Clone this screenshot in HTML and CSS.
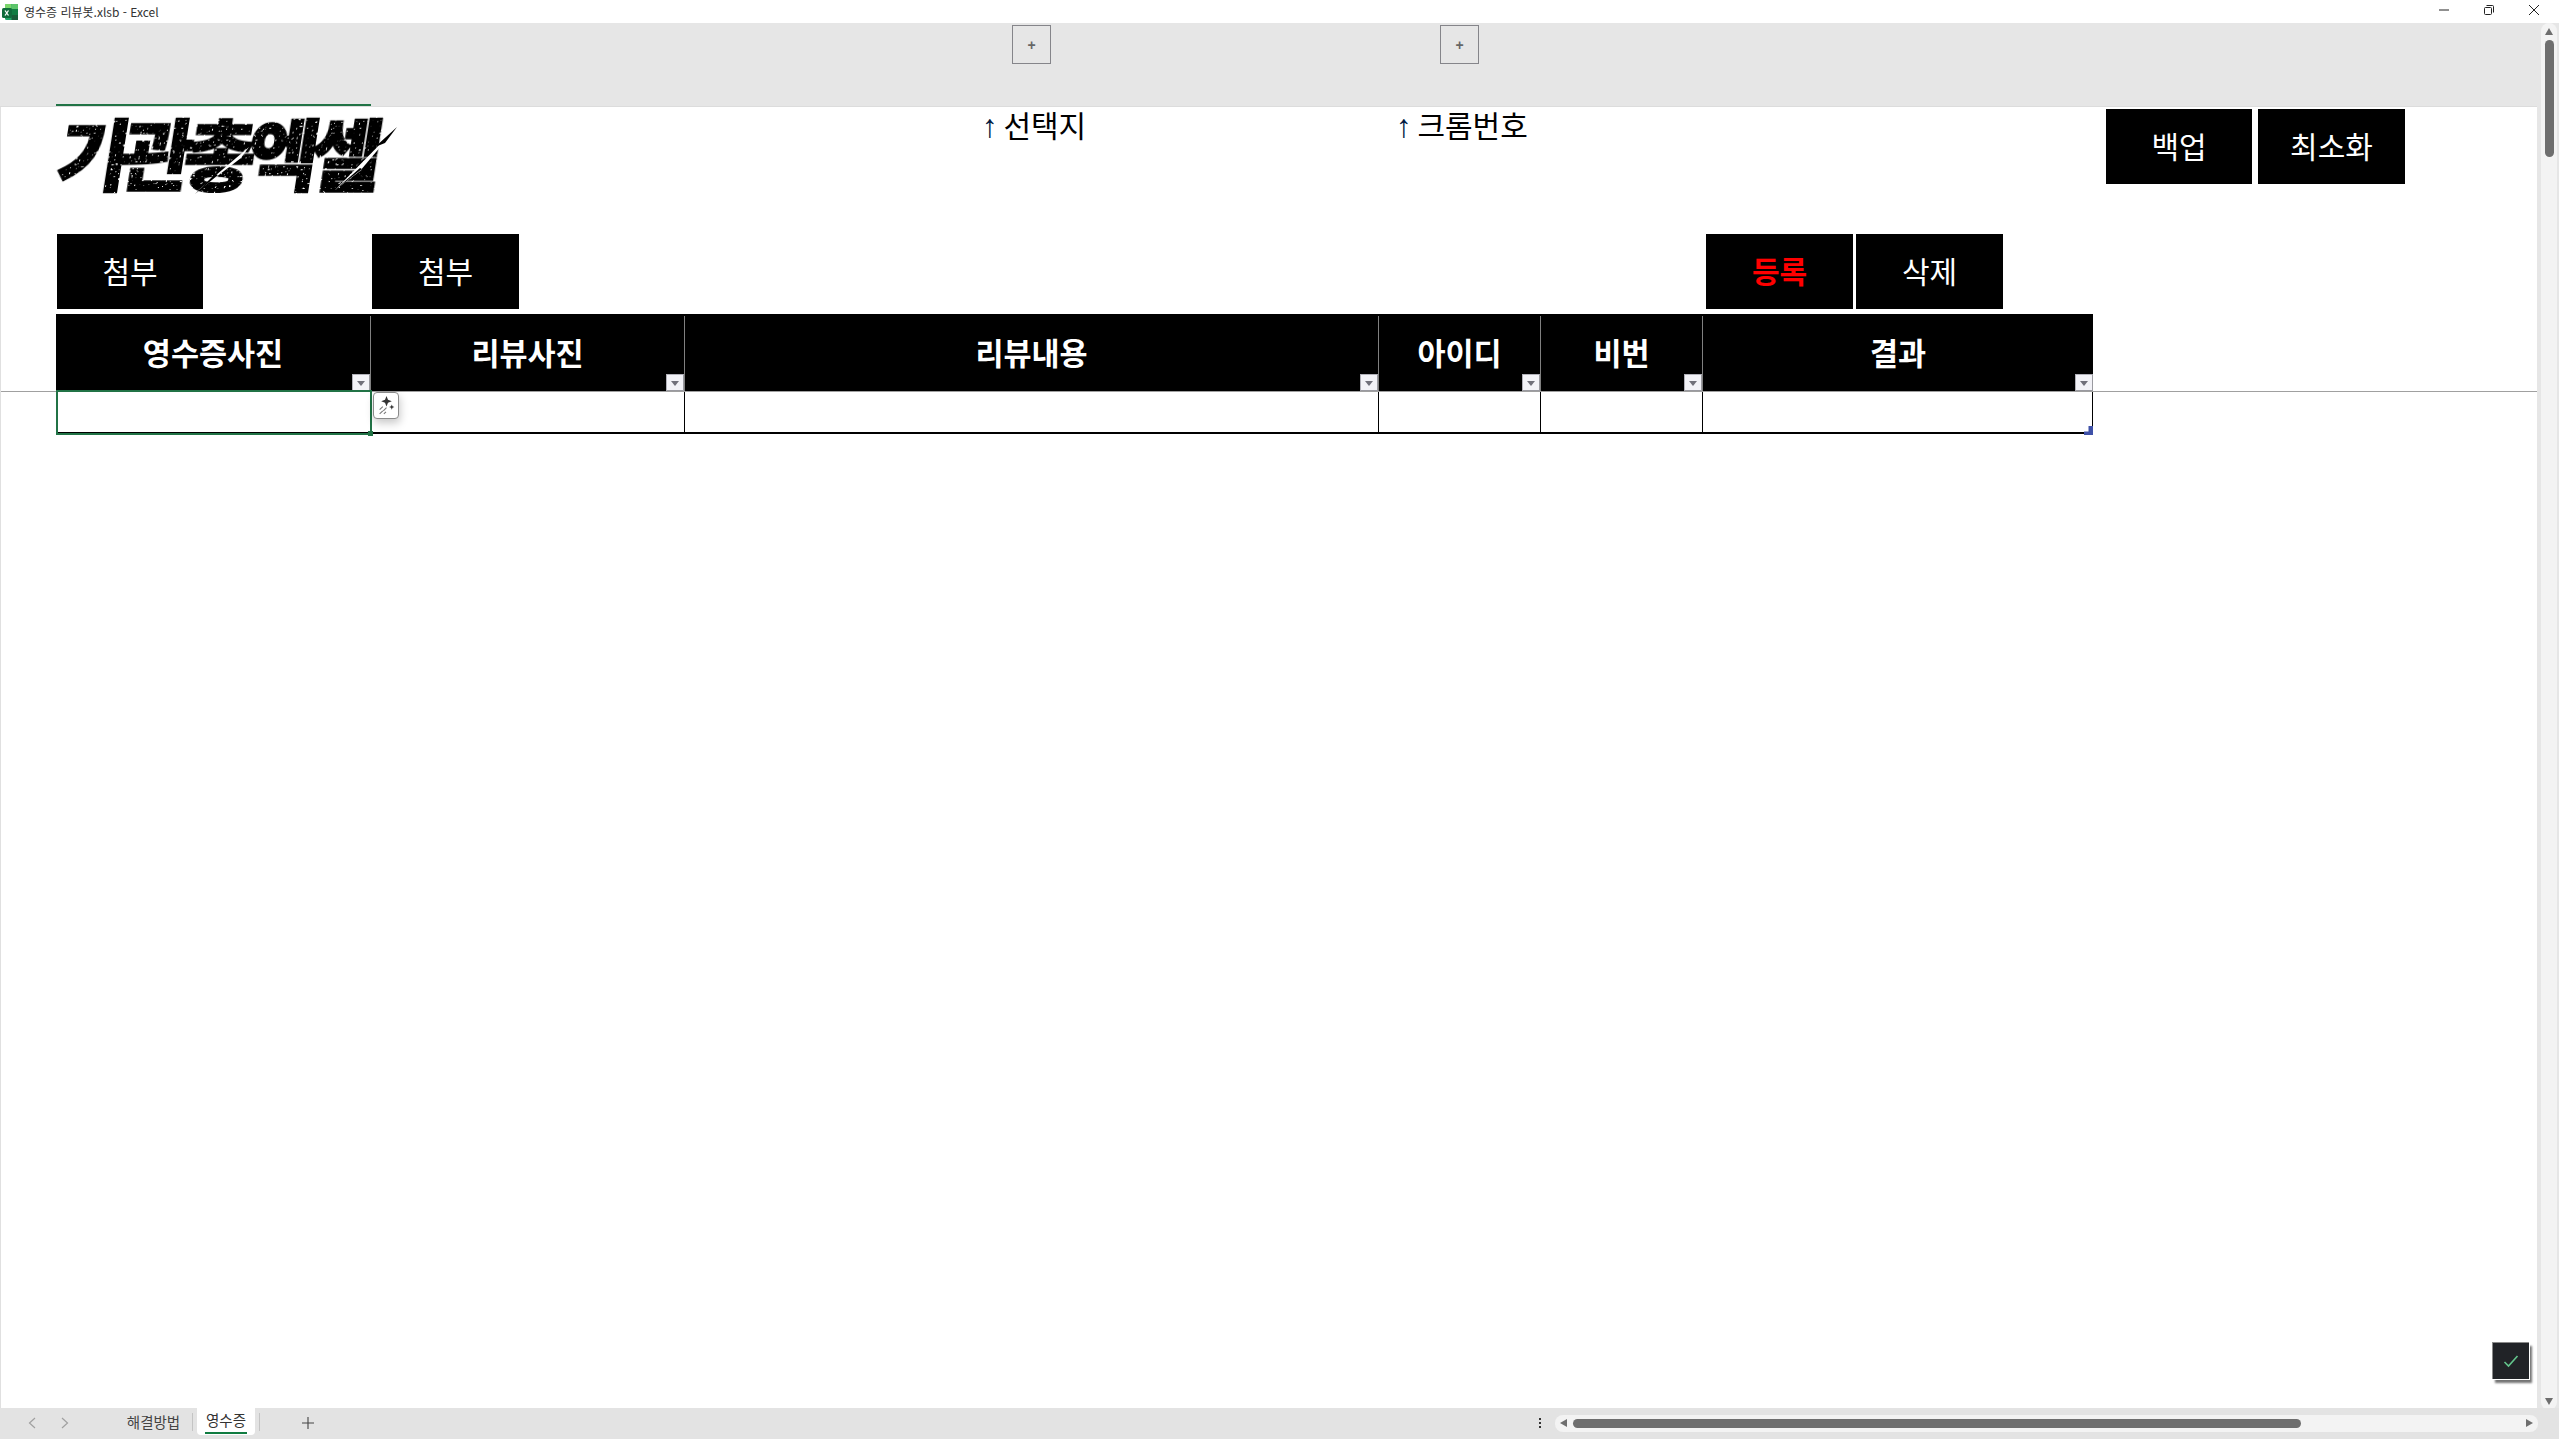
FILE: index.html
```html
<!DOCTYPE html>
<html lang="ko">
<head>
<meta charset="utf-8">
<title>영수증 리뷰봇.xlsb - Excel</title>
<link rel="stylesheet" href="styles.css">
</head>
<body>
<header class="titlebar">
  <svg class="app-icon" viewBox="0 0 16 16" width="16" height="16"><rect x="3" y="0" width="13" height="16" rx="1.5" fill="#21a366"/><rect x="3" y="0" width="6.5" height="5" rx="1" fill="#7ad66b"/><rect x="9.5" y="0" width="6.5" height="5" fill="#5cc46a"/><rect x="9.5" y="5" width="6.5" height="6" fill="#107c41"/><rect x="9.5" y="11" width="6.5" height="5" fill="#185c37"/><rect x="0" y="4" width="10" height="10" rx="1.5" fill="#0f6b3a"/><path d="M3 6.5l3.5 5M6.5 6.5l-3.5 5" stroke="#fff" stroke-width="1.3" fill="none"/></svg>
  <span class="app-title">영수증 리뷰봇.xlsb - Excel</span>
  <div class="win-controls">
    <svg viewBox="0 0 12 12" width="12" height="12"><path d="M1 6h10" stroke="#222" fill="none"/></svg>
    <svg viewBox="0 0 12 12" width="12" height="12"><rect x="1.5" y="3.5" width="7" height="7" rx="1" stroke="#222" fill="none"/><path d="M3.5 1.5h6a1 1 0 0 1 1 1v6" stroke="#222" fill="none"/></svg>
    <svg viewBox="0 0 12 12" width="12" height="12"><path d="M1 1l10 10M11 1L1 11" stroke="#222" fill="none"/></svg>
  </div>
</header>

<div class="middle">
  <main class="workspace">
    <div class="group-band">
      <span class="col-mark"></span>
      <button class="outline-btn first">+</button>
      <button class="outline-btn second">+</button>
    </div>

    <section class="sheet">
      <div class="row-logo">
        <div class="logo-cell">
          <div class="logo">
            <span class="logo-text">기관총엑셀</span>
            <svg class="logo-slash" viewBox="0 0 340 90" width="340" height="90">
              <path d="M138 84L192 38L184 49L150 75Z" fill="#fff"/>
              <path d="M138 85l20-20 3 1Z" fill="#000"/>
              <path d="M278 81L340 18L303 62Z" fill="#fff"/>
              <path d="M278 81l25-22 2 1Z M318 38l22-20-12 16Z" fill="#000"/>
            </svg>
          </div>
        </div>
        <p class="caption caption-a"><span class="arrow">↑</span> 선택지</p>
        <p class="caption caption-b"><span class="arrow">↑</span> 크롬번호</p>
        <button class="shape backup">백업</button>
        <button class="shape gap-6">최소화</button>
      </div>

      <div class="row-actions">
        <button class="shape attach-a">첨부</button>
        <button class="shape attach-b">첨부</button>
        <button class="shape register">등록</button>
        <button class="shape gap-3">삭제</button>
      </div>

      <div class="table-head-line">
        <div class="table-grid head">
          <div class="th">영수증사진<span class="filter"></span></div>
          <div class="th">리뷰사진<span class="filter"></span></div>
          <div class="th">리뷰내용<span class="filter"></span></div>
          <div class="th">아이디<span class="filter"></span></div>
          <div class="th">비번<span class="filter"></span></div>
          <div class="th">결과<span class="filter"></span></div>
        </div>
      </div>
      <div class="table-body">
        <div class="table-grid body">
          <div class="td selected"><span class="fill-handle"></span>
            <span class="smart-tag">
              <svg viewBox="0 0 16 18" width="17" height="19"><path d="M8 0l1.400 3.600L13 5 9.400 6.400 8 10 6.600 6.400 3 5l3.600-1.400z" fill="#333"/><path d="M13 8l.7 1.800 1.800.7-1.800.7L13 13l-.7-1.800-1.800-.7 1.800-.7z" fill="#333"/><path d="M1.500 13l3-3M5 14l3-3M1.500 17l3-3M5.500 17l2-2" stroke="#777" stroke-width="1" fill="none"/></svg>
            </span>
          </div>
          <div class="td"></div>
          <div class="td"></div>
          <div class="td"></div>
          <div class="td"></div>
          <div class="td last"><span class="resize-handle"></span></div>
        </div>
      </div>

      <div class="status-check">
        <svg viewBox="0 0 16 14" width="16" height="14"><path d="M1.500 8l4 4L14.500 2" stroke="#63c58c" stroke-width="1.600" fill="none"/></svg>
      </div>
    </section>
  </main>

  <aside class="vscroll">
    <div class="vtrack">
      <span class="tri up"></span>
      <span class="vthumb"></span>
      <span class="tri down"></span>
    </div>
  </aside>
</div>

<footer class="bottombar">
  <svg class="nav" viewBox="0 0 8 12" width="8" height="12"><path d="M7 1L1.500 6 7 11" stroke="#a0a0a0" stroke-width="1.200" fill="none"/></svg>
  <svg class="nav nav-next" viewBox="0 0 8 12" width="8" height="12"><path d="M1 1l5.500 5L1 11" stroke="#a0a0a0" stroke-width="1.200" fill="none"/></svg>
  <span class="tab">해결방법</span>
  <span class="tab-sep"></span>
  <span class="tab active">영수증</span>
  <span class="tab-sep after"></span>
  <svg class="add-sheet" viewBox="0 0 12 12" width="12" height="12"><path d="M6 0v12M0 6h12" stroke="#444" stroke-width="1.100" fill="none"/></svg>
  <span class="dots"><i></i><i></i><i></i></span>
  <div class="htrack">
    <span class="tri left"></span>
    <span class="hthumb"></span>
    <span class="tri right"></span>
  </div>
</footer>

<svg class="defs" width="0" height="0">
  <filter id="grunge" x="0" y="0" width="100%" height="100%">
    <feTurbulence type="fractalNoise" baseFrequency="0.42" numOctaves="2" seed="7" result="n"/>
    <feColorMatrix in="n" type="matrix" values="0 0 0 0 0 0 0 0 0 0 0 0 0 0 0 0 0 0 -14 10.600" result="m"/>
    <feComposite in="SourceGraphic" in2="m" operator="in"/>
  </filter>
</svg>
</body>
</html>
```
FILE: styles.css
```css
* { box-sizing: border-box; }
html, body { margin: 0; height: 100%; }
body {
  width: 2559px;
  height: 1439px;
  overflow: hidden;
  background: #fff;
  display: flex;
  flex-direction: column;
  font-family: "Noto Sans CJK KR", "Noto Sans", sans-serif;
  color: #000;
}
.defs { position: absolute; }

/* title bar */
.titlebar {
  height: 23px;
  flex: none;
  display: flex;
  align-items: center;
  padding-left: 2px;
  background: #fff;
}
.app-icon { flex: none; }
.app-title {
  margin-left: 6px;
  font-size: 12px;
  color: #333;
  line-height: 23px;
}
.win-controls {
  margin-left: auto;
  display: flex;
  gap: 33px;
  padding-right: 19px;
  margin-top: -3px;
}

/* middle */
.middle { height: 1385px; flex: none; display: flex; }
.workspace { width: 2537px; display: flex; flex-direction: column; }

.group-band {
  height: 84px;
  flex: none;
  position: relative;
  display: flex;
  align-items: flex-start;
  background: #e6e6e6;
  border-bottom: 1px solid #dcdcdc;
}
.col-mark {
  position: absolute;
  left: 56px;
  bottom: 0;
  width: 315px;
  height: 2px;
  background: #217346;
}
.outline-btn {
  width: 39px;
  height: 39px;
  margin: 2px 0 0;
  padding: 0;
  border: 1px solid #85858a;
  background: #e6e6e6;
  color: #666;
  font: 700 14px/1 "Liberation Sans", sans-serif;
}
.outline-btn.first { margin-left: 1012px; }
.outline-btn.second { margin-left: 389px; }

/* sheet */
.sheet {
  position: relative;
  flex: 1;
  border-left: 1px solid #e0e0e0;
  background: #fff;
}
.row-logo {
  display: flex;
  height: 127px;
  padding-top: 2px;
  align-items: flex-start;
}
.logo-cell { width: 981px; padding-left: 56px; }
.logo { position: relative; width: 340px; height: 90px; }
.logo-text {
  display: block;
  transform: skewX(-9deg);
  transform-origin: left bottom;
  font-size: 78px;
  font-weight: 900;
  line-height: 84px;
  letter-spacing: -8.500px;
  white-space: nowrap;
  color: #000;
  margin-left: -5px;
  -webkit-text-stroke: 1.500px #000;
  filter: url(#grunge);
}
.logo-slash { position: absolute; left: 0; top: 0; }

.caption {
  margin: -1px 0 0;
  font-size: 30px;
  line-height: 32px;
  white-space: nowrap;
}
.arrow { font-family: "Liberation Sans", sans-serif; color: #001a40; font-size: 32px; margin-right: -3px; }
.caption-a { width: 414px; }
.caption-b { width: 710px; }

.shape {
  flex: none;
  width: 147px;
  height: 75px;
  padding: 0 0 3px;
  border: 0;
  background: #000;
  color: #fff;
  font-family: inherit;
  font-size: 30px;
  font-weight: 400;
}
.backup { width: 146px; }
.gap-6 { margin-left: 6px; }
.gap-3 { margin-left: 3px; }

.row-actions { display: flex; height: 75px; margin-bottom: 5px; }
.attach-a { margin-left: 56px; width: 146px; }
.attach-b { margin-left: 169px; }
.register { margin-left: 1187px; color: #f00; font-weight: 700; }

/* table */
.table-head-line { border-bottom: 1px solid #a0a0a0; padding-left: 55px; height: 78px; }
.table-body { padding-left: 55px; }
.table-grid {
  display: grid;
  grid-template-columns: 315px 314px 694px 162px 162px 390px;
  width: 2037px;
}
.table-grid.head { height: 77px; background: #000; }
.th {
  position: relative;
  display: flex;
  align-items: center;
  justify-content: center;
  color: #fff;
  font-size: 30.500px;
  font-weight: 700;
  margin-top: 2px;
  border-right: 1px solid #808080;
}
.th:last-child { border-right: 0; }
.th { padding-bottom: 3px; }
.filter {
  position: absolute;
  right: 0;
  bottom: 0;
  width: 18px;
  height: 17px;
  background: #f2f2f7;
  border: 1px solid #b0b0b8;
  border-right-color: #9a9aa0;
  border-bottom-color: #9a9aa0;
}
.filter::after {
  content: "";
  position: absolute;
  left: 4px;
  top: 6px;
  border: 4px solid transparent;
  border-top: 5px solid #70707a;
  border-bottom: 0;
}
.table-grid.body { height: 42px; border-bottom: 2px solid #000; border-right: 1px solid #000; }
.td { position: relative; border-right: 1px solid #000; }
.td.last { border-right: 0; }
.td.selected {
  margin: -2px -1px -2px 0;
  border: 2px solid #217346;
  height: 45px;
  z-index: 1;
}
.fill-handle {
  position: absolute;
  right: -3px;
  bottom: -3px;
  width: 5px;
  height: 5px;
  background: #217346;
  border: 0;
}
.smart-tag {
  position: absolute;
  left: 315px;
  top: 0;
  width: 26px;
  height: 27px;
  background: #fff;
  border: 1px solid #8a8a8a;
  border-radius: 4px;
  box-shadow: 1px 4px 8px rgba(0,0,0,.22);
  display: flex;
  align-items: center;
  justify-content: center;
}
.resize-handle {
  position: absolute;
  right: 0;
  bottom: -2px;
  width: 9px;
  height: 9px;
  background: #3f51a8;
  clip-path: polygon(100% 0, 100% 100%, 0 100%, 0 60%, 50% 60%, 50% 0);
}
.status-check {
  position: absolute;
  right: 8px;
  bottom: 29px;
  width: 37px;
  height: 37px;
  background: #212327;
  border-top: 1px solid #8a8a8a;
  border-left: 1px solid #8a8a8a;
  outline: 0;
  box-shadow: 1px 1px 0 #fff, 3px 4px 2px rgba(0,0,0,.55);
  display: flex;
  align-items: center;
  justify-content: center;
}

/* scrollbars */
.vscroll { width: 22px; background: #e6e6e6; padding-left: 4px; padding-right: 2px; }
.vtrack {
  position: relative;
  height: 1387px;
  background: #f3f3f3;
  border-radius: 8px;
  display: flex;
  flex-direction: column;
  align-items: center;
  padding-top: 17px;
}
.vthumb { width: 9px; height: 117px; border-radius: 5px; background: #6e6e6e; }
.tri { position: absolute; width: 0; height: 0; border: 4.500px solid transparent; }
.tri.up { top: 5px; border-top: 0; border-bottom: 7px solid #6e6e6e; }
.tri.down { bottom: 5px; border-bottom: 0; border-top: 7px solid #6e6e6e; }
.tri.left { left: 5px; top: 4px; border-left: 0; border-right: 7px solid #6e6e6e; }
.tri.right { right: 5px; top: 4px; border-right: 0; border-left: 7px solid #6e6e6e; }

.bottombar {
  height: 31px;
  flex: none;
  display: flex;
  align-items: center;
  background: #e3e3e3;
  position: relative;
}
.nav { margin-left: 28px; flex: none; margin-top: -2px; }
.nav-next { margin-left: 25px; }
.tab {
  font-size: 14.500px;
  color: #444;
  line-height: 27px;
  white-space: nowrap;
  margin-left: 57px;
  width: 55px;
  align-self: flex-start;
  text-align: center;
}
.tab-sep { width: 1px; height: 18px; background: #c4c4c4; margin-left: 11px; margin-top: -4px; }
.tab.active {
  position: relative;
  margin-left: 4px;
  width: 58px;
  height: 27px;
  background: #fff;
  color: #333;
  border-radius: 0 0 4px 4px;
  line-height: 23px;
}
.tab.active::after {
  content: "";
  position: absolute;
  left: 8px;
  right: 8px;
  bottom: 1px;
  height: 2px;
  background: #107c41;
}
.tab-sep.after { margin-left: 4px; }
.add-sheet { margin-left: 42px; flex: none; margin-top: -2px; }
.dots { display: flex; flex-direction: column; gap: 2px; margin-left: 1225px; margin-top: -2px; }
.dots i { display: block; width: 2px; height: 2px; background: #333; }
.htrack {
  position: relative;
  width: 983px;
  height: 17px;
  margin-left: 14px;
  margin-top: 0;
  background: #f3f3f3;
  border-radius: 8px;
  padding: 4px 0 0 18px;
}
.hthumb { display: block; width: 728px; height: 9px; border-radius: 5px; background: #6e6e6e; }
```
